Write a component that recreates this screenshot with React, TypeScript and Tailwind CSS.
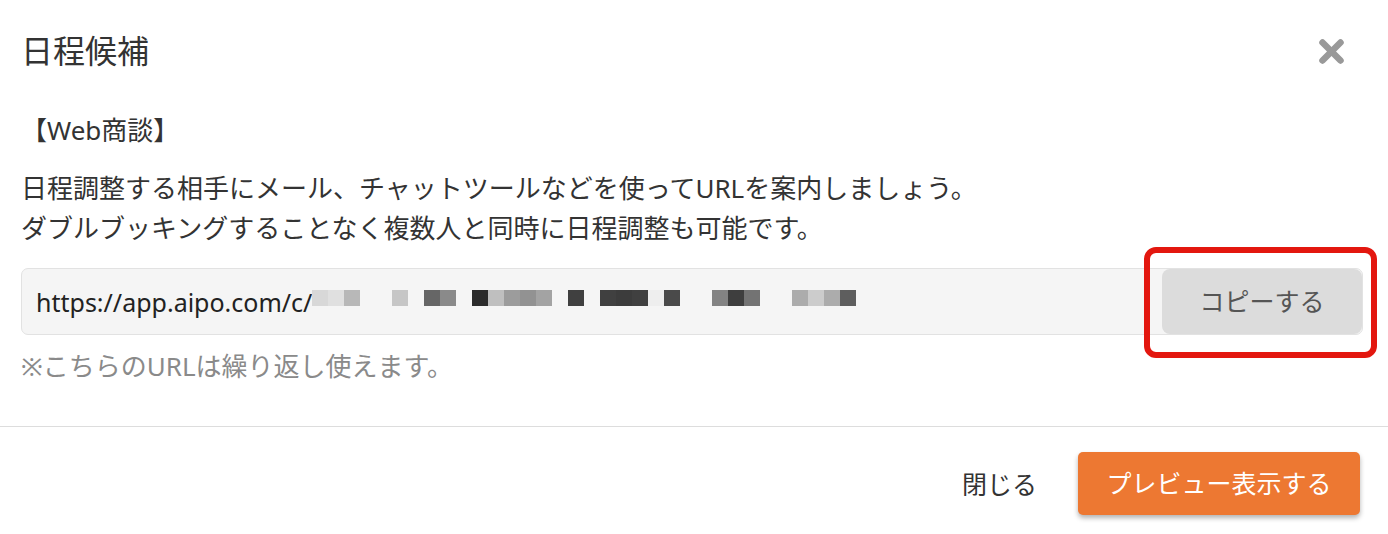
import React from "react";

const mosaic: (string | null)[] = [
  "#d8d8d8", "#e0e0e0", "#b8b8b8", null, null, "#c6c6c6", null, "#666666", "#8a8a8a", null,
  "#2c2c2c", "#bfbfbf", "#9c9c9c", "#929292", "#a3a3a3", null, "#404040", null, "#404040", "#3c3c3c",
  "#404040", "#eeeeee", "#4a4a4a", null, null, "#838383", "#3e3e3e", "#737373", null, null,
  "#acacac", "#cccccc", "#acacac", "#5e5e5e",
];

export default function App() {
  return (
    <div className="w-[1388px] h-[534px] bg-white text-[#333333] font-['Noto_Sans','Noto_Sans_CJK_JP',sans-serif] flex flex-col">
      {/* Header */}
      <div className="flex items-center justify-between pt-[31px] pl-[21px] pr-[44px]">
        <h1 className="text-[32px] leading-[40px] font-normal text-[#333333]">日程候補</h1>
        <button className="w-[25px] h-[25px] flex items-center justify-center">
          <svg width="25" height="25" viewBox="0 0 25 25">
            <line x1="3.5" y1="3.5" x2="21.5" y2="21.5" stroke="#999999" strokeWidth="6.5" strokeLinecap="round" />
            <line x1="21.5" y1="3.5" x2="3.5" y2="21.5" stroke="#999999" strokeWidth="6.5" strokeLinecap="round" />
          </svg>
        </button>
      </div>

      {/* Body */}
      <div className="pl-[21px] pr-[25px] pb-[40px]">
        <p className="mt-[39px] text-[26px] leading-[40px]">【Web商談】</p>
        <p className="mt-[18px] text-[26px] leading-[40px] whitespace-nowrap">
          日程調整する相手にメール、チャットツールなどを使ってURLを案内しましょう。
          <br />
          ダブルブッキングすることなく複数人と同時に日程調整も可能です。
        </p>

        <div className="relative mt-[20px]">
          <div className="flex items-center h-[67px] border border-[#e2e2e2] bg-[#f5f5f5] rounded-[7px] pl-[14px]">
            <span className="text-[25px] leading-[40px] text-[#222222] whitespace-nowrap">https://app.aipo.com/c/</span>
            <div className="flex h-[16px] mb-[7px]">
              {mosaic.map((c, i) => (
                <span key={i} className="w-[16px] h-[16px] block" style={{ backgroundColor: c ?? "transparent" }} />
              ))}
            </div>
            <button className="ml-auto h-[65px] w-[200px] rounded-[8px] bg-[#dcdcdc] text-[25px] text-[#555555] flex items-center justify-center">
              コピーする
            </button>
          </div>
          <div className="absolute left-[1123px] top-[-21px] w-[233px] h-[111px] border-[6px] border-[#e3170f] rounded-[12px] pointer-events-none" />
        </div>

        <p className="mt-[11px] text-[26px] leading-[40px] text-[#8a8a8a]">※こちらのURLは繰り返し使えます。</p>
      </div>

      {/* Divider */}
      <div className="h-px bg-[#dddddd]" />

      {/* Footer */}
      <div className="flex items-center justify-end gap-[41px] pt-[25px] pr-[28px]">
        <button className="text-[25px] leading-[40px] text-[#333333]">閉じる</button>
        <button className="h-[63px] w-[282px] rounded-[5px] bg-[#ed7832] text-white text-[25px] shadow-[0_3px_5px_rgba(0,0,0,0.3)] flex items-center justify-center">
          プレビュー表示する
        </button>
      </div>
    </div>
  );
}
